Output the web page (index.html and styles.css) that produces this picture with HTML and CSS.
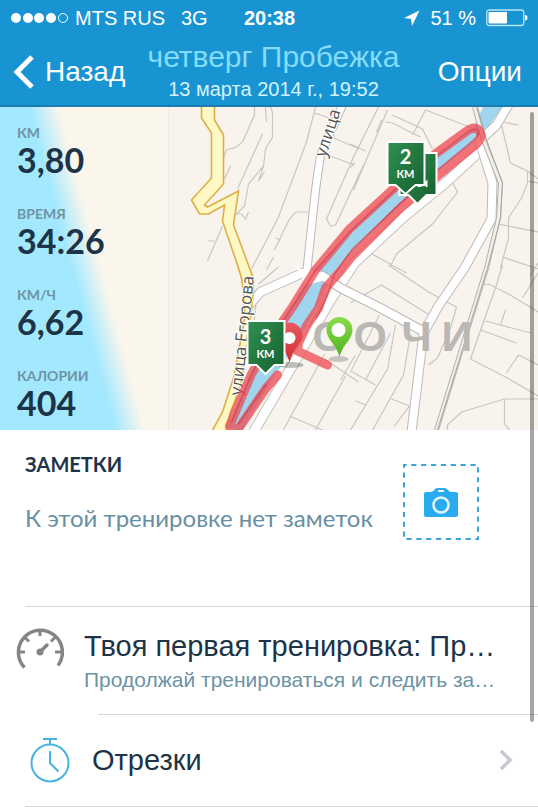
FILE: index.html
```html
<!DOCTYPE html>
<html lang="ru">

<head>
    <meta charset="UTF-8">
    <meta name="viewport" content="width=device-width, initial-scale=1.0">
    <title>четверг Пробежка</title>
    <link rel="stylesheet" href="styles.css">
</head>

<body>
    <header class="top">
        <div class="status">
            <div class="status-left">
                <svg class="signal" width="58" height="12" viewBox="0 0 58 12" aria-hidden="true">
                    <g fill="#fff">
                        <circle cx="5" cy="6" r="5"/>
                        <circle cx="17" cy="6" r="5"/>
                        <circle cx="28" cy="6" r="5"/>
                        <circle cx="40" cy="6" r="5"/>
                    </g>
                    <circle cx="52" cy="6" r="4.5" fill="none" stroke="#fff"/>
                </svg>
                <span>MTS RUS</span>
                <span class="network">3G</span>
            </div>
            <div class="clock">20:38</div>
            <div class="status-right">
                <svg width="16" height="16" viewBox="0 0 16 16" aria-hidden="true">
                    <path d="M15.500 .5L0 8l7 1 1 7z" fill="#fff"/>
                </svg>
                <span>51 %</span>
                <svg width="42" height="18" viewBox="0 0 42 18" aria-hidden="true">
                    <rect x=".75" y="1" width="37" height="15.500" rx="2.500" fill="none" stroke="#b9e4f7" stroke-width="1.300"/>
                    <rect x="2.500" y="3" width="18.500" height="11.500" rx="1" fill="#fff"/>
                    <path d="M39 6q2.500 0 2.500 2.800T39 11.500z" fill="#fff"/>
                </svg>
            </div>
        </div>
        <nav class="navbar">
            <a class="back" href="#">
                <svg width="22" height="34" viewBox="0 0 22 34" aria-hidden="true">
                    <path d="M19 2L4 17l15 15" fill="none" stroke="#fff" stroke-width="5"/>
                </svg>
                Назад
            </a>
            <div class="heading">
                <h1>четверг Пробежка</h1>
                <p>13 марта 2014 г., 19:52</p>
            </div>
            <button type="button" class="options">Опции</button>
        </nav>
    </header>

    <main>
        <section class="overview">
            <dl class="stats">
                <div><dt>КМ</dt><dd>3,80</dd></div>
                <div><dt>ВРЕМЯ</dt><dd>34:26</dd></div>
                <div><dt>КМ/Ч</dt><dd>6,62</dd></div>
                <div><dt>КАЛОРИИ</dt><dd>404</dd></div>
            </dl>
            <svg class="map" viewBox="168 107 370 323" preserveAspectRatio="xMidYMid slice" role="img" aria-label="Карта маршрута">
                <defs>
                    <linearGradient id="flagGreen" x1="0" y1="0" x2="1" y2="1">
                        <stop offset="0" stop-color="#2f9150"/>
                        <stop offset="1" stop-color="#175f30"/>
                    </linearGradient>
                    <linearGradient id="pinGreen" x1="0" y1="0" x2="0" y2="1">
                        <stop offset="0" stop-color="#8bdc4c"/>
                        <stop offset="1" stop-color="#4fb31d"/>
                    </linearGradient>
                    <linearGradient id="pinRed" x1="0" y1="0" x2="0" y2="1">
                        <stop offset="0" stop-color="#e8595d"/>
                        <stop offset="1" stop-color="#d22e36"/>
                    </linearGradient>
                </defs>
                <rect x="168" y="107" width="370" height="323" fill="#f8f4ed"/>

                <!-- lanes -->
                <g fill="none" stroke="#c9c6c2" stroke-width="1.200">
                    <path d="M254 107v8l-12 27-6 5-10 3-4 10M265 107l1 15M270 107l2 5v25l-7 12-2 17-15 18-4 22-8 8M262 134l-25 55M230 166l-6 13M263 166l-5 15 6-9M235 214h6l4 5 3-7M222 226l-15 35M207 241h7"/>
                    <path d="M315 107l-9 35-28 75-27 52M314 113l24 8M308 212h-13l-6 7-15 31M275 238l5 2M273 257l-7 13M331 137l28 12M327 155l27 10"/>
                    <path d="M378 107l-25 50-27 62 4 7 5-1 28-60M387 110l-34 80M381 120l-5 12M385 122l7 1 28 14M425 110l-13 25M425 110l57 22M392 115l30 14 10 20M350 144l15 7M350 168l4-6"/>
                    <path d="M445 170l12 22-25 32-36 30-6 12M366 251l40 22M500 121l10 42 17 8 11 8M502 122l16 3M527 171v12l-6 15-13 20v20l-8 30M527 181l11 2M492 223l46 9M502 257l36 12"/>
                    <path d="M388 265l40 27 28 15-6 21-13 30-9 7M350 303l31-18 48 30-3 12M478 285l10-1 20 10 30 18M502 265l-6 20-26 74 35 18 33 19M485 321l45 12M480 330l36 13M530 275l8-13M522 298l16-26M505 310l-5 15M506 373l12-18 20 10"/>
                    <path d="M447 430v-5l14-13 43-13h34l1-20M504 399v25l5 6M395 325l-8 44-37 61M409 340l-6 35-31 55M379 315l-28 55M390 333l-25 47M350 371l25 14M391 399l18 7-15 20M355 401l10 4"/>
                    <path d="M289 416l35 15M324 354l-41 76M345 376l-30 54M324 359l34 23M355 355l-15 25M325 293l-42 88"/>
                    <path d="M258 284l20-17M256 298l-4 40"/>
                </g>

                <!-- side street along the river -->
                <g fill="none" stroke-linejoin="round">
                    <path d="M486 145L446 182 402 218 354 263 330 300 300 352 253 432" stroke="#c4c1bd" stroke-width="11"/>
                    <path d="M486 145L446 182 402 218 354 263 330 300 300 352 253 432" stroke="#fff" stroke-width="9"/>
                </g>

                <!-- river -->
                <path d="M484 104h20l-20 28-6 6-41 34-37 33-50 47-20 24-12 28-16 28-39 62-22 38-14-5 24-55 35-57 30-45 34-38 47-46 40-30 36-28z" fill="#a0d5ee"/>

                <!-- white streets -->
                <g fill="none" stroke-linejoin="round">
                    <g stroke="#bdbab6">
                        <path d="M508 105l-12 20-17 16 13 42-1 36-27 49-26 38-15 27-12 99" stroke-width="10"/>
                        <path d="M248 306l12-14 42-19 20 3 18 12 40 20 44 24" stroke-width="10"/>
                        <path d="M342 105l-22 50-5 35-9 84" stroke-width="9"/>
                    </g>
                    <g stroke="#fff">
                        <path d="M508 105l-12 20-17 16 13 42-1 36-27 49-26 38-15 27-12 99" stroke-width="8"/>
                        <path d="M248 306l12-14 42-19 20 3 18 12 40 20 44 24" stroke-width="8"/>
                        <path d="M342 105l-22 50-5 35-9 84" stroke-width="7"/>
                    </g>
                    <path d="M294 265l8 5h10l14 10-20 5z" fill="#fff"/>
                </g>

                <!-- railway -->
                <g fill="none">
                    <path d="M474 107l9 33 17 43-2 35-12 50-50 162" stroke="#b3b1ae" stroke-width="5"/>
                    <path d="M474 107l9 33 17 43-2 35-12 50-50 162" stroke="#f3f0eb" stroke-width="3"/>
                    <path d="M477 107l9 33 16 43-2 35-13 50-50 162" stroke="#a9a7a4"/>
                </g>

                <!-- yellow main road -->
                <path d="M201 104v14l10 15v45l-20 22 8 14h9l16-9-2 16 15 44 4 13q5 30 2 47l-10 53-11 34-12 22h15l5-22 10-26 8-50 5-45-1-15-19-51 5-34-31 16-3-2 19-21v-49l-9-15v-16z" fill="#fdf8c4" stroke="#dfae45" stroke-width="1.600"/>

                <!-- city and street names -->
                <text class="city" x="312 353 401 441" y="351">СОЧИ</text>
                <text class="street" transform="translate(325 158) rotate(-72)">улица</text>
                <text class="street" transform="translate(241 396) rotate(-84)">улица Егорова</text>

                <!-- route -->
                <g fill="none" stroke="#ef4850" stroke-linecap="round" stroke-linejoin="round">
                    <path d="M327 365l-17-8-13-6 1-8 8-17 12-18 7-20 15-17 11-14 50-50 37-32 38-31q7-7 3-13-5-6-14 1l-29 21-40 33-47 43-34 41-23 37-11 16-30 51-22 52 8 4 28-41 12-14" stroke-width="9" opacity=".75"/>
                    <path d="M231 422l20-48 30-51 12-18 23-36 34-38 47-44 40-32 30-23q9-5 11-1 1 4-5 9l-35 29-38 34-48 46-18 25-8 24-10 20M238 424l28-40" stroke="#c93a4a" stroke-width="1.500" opacity=".6"/>
                </g>

                <!-- finish and start pins -->
                <ellipse cx="290" cy="365" rx="13" ry="3" fill="#000" opacity=".25"/>
                <path d="M289 362q-3-9-8-16-5-7-5-10a13 13 0 0 1 26-1q0 5-5 11-6 8-8 16z" fill="url(#pinRed)"/>
                <circle cx="289" cy="338" r="6" fill="#fff"/>
                <ellipse cx="338" cy="359" rx="10" ry="3" fill="#000" opacity=".2"/>
                <path d="M339 357q-2-8-8-15-5-7-5-12a13 13 0 0 1 26 0q0 5-5 12-6 7-8 15z" fill="url(#pinGreen)"/>
                <circle cx="338" cy="330" r="7" fill="#fff"/>

                <!-- kilometre flags -->
                <g stroke="#fff" stroke-width="2">
                    <path d="M399 153h37v42h-10l-9 9-9-9h-9z" fill="url(#flagGreen)"/>
                    <path d="M412 187v-5l3 3 3-3v5M420 187v-5l3 3 3-3v5" fill="none"/>
                    <path d="M387 142h37v43h-9l-10 9-10-9h-8z" fill="url(#flagGreen)"/>
                    <path d="M247 321h37v44h-10l-9 9-9-9h-9z" fill="url(#flagGreen)"/>
                </g>
                <g class="flag">
                    <text x="405" y="164">2</text>
                    <text class="unit" x="405" y="178">КМ</text>
                    <text x="265" y="344">3</text>
                    <text class="unit" x="265" y="358">КМ</text>
                </g>
            </svg>
        </section>

        <section class="notes">
            <div>
                <h2>ЗАМЕТКИ</h2>
                <p>К этой тренировке нет заметок</p>
            </div>
            <button type="button" class="photo" aria-label="Добавить фото">
                <svg width="76" height="76" viewBox="0 0 76 76" aria-hidden="true">
                    <rect x="1" y="1" width="74" height="74" fill="none" stroke="#3ba5da" stroke-width="2" stroke-dasharray="5.200 4.660" stroke-dashoffset="2.600"/>
                    <path d="M23 28h5q2 0 4-3 1-1 3-1h6q2 0 3 1 2 3 4 3h5q2 0 2 2v21q0 2-2 2H23q-2 0-2-2V30q0-2 2-2z" fill="#29abf0"/>
                    <rect x="35" y="26" width="6" height="2" rx="1" fill="#fff"/>
                    <circle cx="38" cy="41" r="7.500" fill="none" stroke="#e4f8ff" stroke-width="2.500"/>
                </svg>
            </button>
        </section>

        <a class="row row-tip" href="#">
            <svg width="48" height="42" viewBox="0 0 48 42" fill="none" stroke="#858585" aria-hidden="true">
                <path d="M8.500 39.500a22 22 0 1 1 33.500-2" stroke-width="3.500"/>
                <path d="M3 24h6M39 24h6M24 2v6M9 9.500l4 4M39 9.500l-4 4" stroke-width="3"/>
                <path d="M24 24l7-7" stroke-width="3.500" stroke-linecap="round"/>
                <circle cx="24" cy="24" r="3.500" fill="#858585" stroke="none"/>
            </svg>
            <div class="row-text">
                <h3>Твоя первая тренировка: Пр…</h3>
                <p>Продолжай тренироваться и следить за…</p>
            </div>
        </a>

        <a class="row row-laps" href="#">
            <svg width="40" height="46" viewBox="0 0 40 46" fill="none" stroke="#45b4df" stroke-width="2" aria-hidden="true">
                <circle cx="20" cy="26" r="18.500"/>
                <path d="M13 2h14M20 2v6M20 14v12l8.500 8.500"/>
            </svg>
            <h3>Отрезки</h3>
            <svg class="chevron" width="14" height="22" viewBox="0 0 14 22" aria-hidden="true">
                <path d="M2 2l9 9-9 9" fill="none" stroke="#c5cbd0" stroke-width="3.500"/>
            </svg>
        </a>
    </main>

    <div class="scrollbar"></div>
</body>

</html>
```

FILE: styles.css
```css
* {
    box-sizing: border-box;
}

body {
    margin: 0;
    position: relative;
    font-family: "Liberation Sans", Arial, sans-serif;
    color: #1d3448;
    background-color: #ffffff;
}

h1, h2, h3, p, dl, dd {
    margin: 0;
    font-weight: normal;
}

a {
    color: inherit;
    text-decoration: none;
}

button {
    padding: 0;
    border: 0;
    background: none;
    font-family: inherit;
}

svg {
    display: block;
    flex-shrink: 0;
}

/* Header */
.top {
    background-color: #1894d2;
    border-bottom: 2px solid #1b7cb1;
    color: #ffffff;
}

.status {
    display: grid;
    grid-template-columns: 1fr auto 1fr;
    align-items: center;
    padding: 6px 10px 0 11px;
    font-size: 20px;
    line-height: 24px;
}

.status-left,
.status-right {
    display: flex;
    align-items: center;
    gap: 6px;
    white-space: nowrap;
}

.status-right {
    justify-content: flex-end;
    gap: 10px;
}

.network {
    margin-left: 10px;
}

.clock {
    font-weight: bold;
}

.navbar {
    display: grid;
    grid-template-columns: 1fr auto 1fr;
    align-items: center;
    padding: 9px 16px 1px 13px;
    white-space: nowrap;
}

.back,
.options {
    font-size: 28px;
    line-height: 32px;
    color: #ffffff;
}

.back {
    display: flex;
    align-items: center;
    gap: 10px;
}

.options {
    justify-self: end;
}

.heading {
    padding-left: 12px;
    text-align: center;
}

.heading h1 {
    font-size: 30px;
    line-height: 36px;
    color: #83dcfb;
}

.heading p {
    font-size: 20px;
    line-height: 29px;
    color: #d3f3ff;
}

/* Stats and map */
.overview {
    display: flex;
    background-color: #fbf6ec;
}

.stats {
    display: flex;
    flex: 0 0 168px;
    flex-direction: column;
    gap: 26px;
    padding: 17px 0 8px 17px;
    background: linear-gradient(75deg, #a2e8ff 0 45%, #fbf6ec 57%);
    font-family: Lato, sans-serif;
}

.stats dt {
    font-size: 14px;
    line-height: 17px;
    color: #6f94a5;
    font-weight: bold;
}

.stats dd {
    font-size: 34px;
    line-height: 38px;
    font-weight: bold;
}

.map {
    flex: 1 1 0;
    min-width: 0;
    border-left: 1px solid #eee9e2;
}

.city {
    font: bold 43px "Liberation Sans", sans-serif;
    fill: #b9b8b4;
}

.street {
    font: 17px "Open Sans", sans-serif;
    fill: #55534f;
    stroke: #ffffff;
    stroke-width: 2px;
    paint-order: stroke;
}

.flag {
    font: bold 20px Lato, sans-serif;
    fill: #ffffff;
    text-anchor: middle;
}

.flag .unit {
    font-size: 11px;
}

/* Notes */
.notes {
    display: flex;
    justify-content: space-between;
    margin-left: 25px;
    padding: 22px 59px 66px 0;
    border-bottom: 1px solid #d5d7d8;
    font-family: Lato, sans-serif;
}

.notes h2 {
    font-size: 20px;
    line-height: 24px;
    font-weight: bold;
}

.notes p {
    margin-top: 28px;
    font-size: 24px;
    line-height: 28px;
    color: #688fa3;
    white-space: nowrap;
}

.photo {
    margin-top: 12px;
}

/* Rows */
.row {
    display: flex;
    align-items: center;
}

.row h3 {
    font-size: 29px;
    line-height: 36px;
    white-space: nowrap;
}

.row-tip {
    gap: 20px;
    padding: 21px 40px 18px 16px;
    align-items: flex-start;
}

.row-text {
    min-width: 0;
}

.row-text p {
    font-size: 21px;
    line-height: 32px;
    color: #6d93a5;
    white-space: nowrap;
}

.row-laps {
    position: relative;
    gap: 22px;
    margin-left: 25px;
    padding: 23px 25px 23px 5px;
    border-bottom: 1px solid #d5d7d8;
}

/* Divider starts under the text, not under the icon */
.row-laps::before {
    content: "";
    position: absolute;
    top: 0;
    left: 73px;
    right: 0;
    border-top: 1px solid #d5d7d8;
}

.chevron {
    margin-left: auto;
}

.scrollbar {
    position: absolute;
    top: 112px;
    right: 4px;
    width: 4px;
    height: 610px;
    border-radius: 2px;
    background-color: rgba(0, 0, 0, 0.35);
}
```
